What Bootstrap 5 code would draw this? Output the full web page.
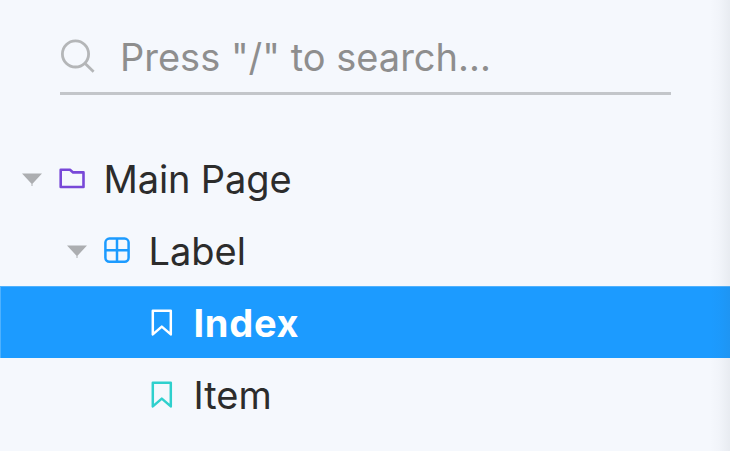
<!DOCTYPE html>
<html lang="en">
<head>
<meta charset="utf-8">
<meta name="viewport" content="width=device-width, initial-scale=1">
<title>Main Page</title>
<link href="https://cdn.jsdelivr.net/npm/bootstrap@5.3.0/dist/css/bootstrap.min.css" rel="stylesheet">
<style>
body { background: #f5f8fd; font-family: Inter, "Liberation Sans", sans-serif; font-size: 38px; color: #2c2c2c; }
.sidebar { height: 451px; }
.edge-shade { top: 0; right: 0; bottom: 0; width: 20px; pointer-events: none; background: linear-gradient(to right, rgba(60,70,85,0), rgba(60,70,85,.02) 45%, rgba(60,70,85,.07)); }
.search-box { margin: 22px 59px 0 60px; height: 73px; border-bottom: 3px solid #c3c6ca; }
.search-box svg { margin-top: -2px; }
.search-input, .search-input:focus { font-size: 38px; line-height: 70px; color: #8e8e8e; margin-left: 24px; background: transparent; box-shadow: none; outline: 0; }
.search-input::placeholder { color: #8e8e8e; opacity: 1; }
.tree { margin-top: 47px; }
.tree-row { height: 72px; line-height: 72px; white-space: nowrap; }
.tree-row span { padding-top: 1px; }
.lvl-1 { padding-left: 22px; letter-spacing: -.13px; }
.lvl-2 { padding-left: 67px; }
.lvl-3 { padding-left: 147px; }
.node-icon { width: 30px; height: 30px; margin-right: 16.5px; }
.caret { width: 20px; height: 14px; margin-right: 15px; margin-top: 3px; }
.tree-row.selected { background: #1c9bff; color: #fff; font-weight: 700; letter-spacing: .7px; box-shadow: inset 1px 1px #4fb1fd; }
</style>
<script src="https://cdn.jsdelivr.net/npm/bootstrap@5.3.0/dist/js/bootstrap.bundle.min.js"></script>
</head>
<body class="overflow-hidden">
<aside class="sidebar position-relative d-flex flex-column overflow-hidden">
  <div class="search-box d-flex align-items-center flex-shrink-0">
    <svg class="flex-shrink-0" width="36" height="36" viewBox="0 0 36 36" fill="none" stroke="#b4b6b8" stroke-width="2.8"><circle cx="15.5" cy="15.9" r="13.1"/><path d="M24.6 25 33.6 33.8"/></svg>
    <input class="search-input form-control border-0 p-0" type="text" placeholder='Press "/" to search...' aria-label="Search">
  </div>
  <nav class="tree d-flex flex-column">
    <div class="tree-row lvl-1 d-flex align-items-center">
      <svg class="caret" viewBox="0 0 20 14"><path d="M0 0.5H20L10.5 10.8V13H9.5V10.8Z" fill="#acaeb1"/></svg>
      <svg class="node-icon" viewBox="0 0 30 30" fill="none" stroke="#7848d8" stroke-width="2.6"><path d="M3.7 6.8H13L16.1 9.4H26.5V24H3.7Z" stroke-linejoin="round"/></svg>
      <span>Main Page</span>
    </div>
    <div class="tree-row lvl-2 d-flex align-items-center">
      <svg class="caret" viewBox="0 0 20 14"><path d="M0 0.5H20L10.5 10.8V13H9.5V10.8Z" fill="#acaeb1"/></svg>
      <svg class="node-icon" viewBox="0 0 30 30" fill="none" stroke="#1c9bff" stroke-width="2.5"><rect x="3.4" y="3.6" width="23.2" height="23.2" rx="4"/><path d="M15 3.6V26.8M3.4 15.2H26.6"/></svg>
      <span>Label</span>
    </div>
    <div class="tree-row lvl-3 selected d-flex align-items-center">
      <svg class="node-icon" viewBox="0 0 30 30" fill="none" stroke="#fff" stroke-width="2.5"><path d="M5.8 3.8H23.8V27.4L14.8 19.6 5.8 27.4Z" stroke-linejoin="round"/></svg>
      <span>Index</span>
    </div>
    <div class="tree-row lvl-3 d-flex align-items-center">
      <svg class="node-icon" viewBox="0 0 30 30" fill="none" stroke="#2fd0cd" stroke-width="2.5"><path d="M5.8 3.8H23.8V27.4L14.8 19.6 5.8 27.4Z" stroke-linejoin="round"/></svg>
      <span>Item</span>
    </div>
  </nav>
  <div class="edge-shade position-absolute"></div>
</aside>
</body>
</html>
